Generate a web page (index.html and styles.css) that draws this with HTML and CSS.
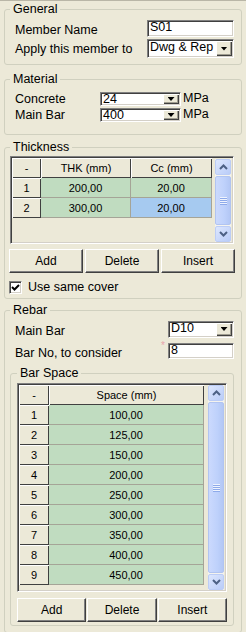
FILE: index.html
```html
<!DOCTYPE html>
<html lang="en">
<head>
  <meta charset="UTF-8">
  <title>Slab Member</title>
  <link rel="stylesheet" href="styles.css">
</head>
<body>
  <div class="panel">
    <!-- General -->
    <fieldset class="group general">
      <legend>General</legend>
      <div class="row">
        <span class="label low">Member Name</span>
        <div class="field wide">S01</div>
      </div>
      <div class="row">
        <span class="label">Apply this member to</span>
        <div class="combo wide tall"><span class="val">Dwg &amp; Rep</span><span class="drop"></span></div>
      </div>
    </fieldset>

    <!-- Material -->
    <fieldset class="group material">
      <legend>Material</legend>
      <div class="row">
        <span class="label fixed">Concrete</span>
        <div class="combo mat"><span class="val">24</span><span class="drop"></span></div>
        <span class="unit">MPa</span>
      </div>
      <div class="row">
        <span class="label fixed">Main Bar</span>
        <div class="combo mat"><span class="val">400</span><span class="drop"></span></div>
        <span class="unit">MPa</span>
      </div>
    </fieldset>

    <!-- Thickness -->
    <fieldset class="group thickness">
      <legend>Thickness</legend>
      <div class="grid thk-grid">
        <div class="cells thk-cells">
          <div class="hd">-</div><div class="hd">THK (mm)</div><div class="hd">Cc (mm)</div>
          <div class="hd">1</div><div class="cell">200,00</div><div class="cell">20,00</div>
          <div class="hd">2</div><div class="cell">300,00</div><div class="cell sel">20,00</div>
        </div>
        <div class="sb thk-sb">
          <div class="sb-btn"><svg width="9" height="6" viewBox="0 0 9 6"><polyline points="1,5 4.5,1.5 8,5" fill="none" stroke="#4d6185" stroke-width="2"/></svg></div>
          <div class="sb-thumb"><span class="grip"></span></div>
          <div class="sb-btn"><svg width="9" height="6" viewBox="0 0 9 6"><polyline points="1,1 4.5,4.5 8,1" fill="none" stroke="#4d6185" stroke-width="2"/></svg></div>
        </div>
      </div>
      <div class="btns thk-btns">
        <button class="btn">Add</button>
        <button class="btn">Delete</button>
        <button class="btn">Insert</button>
      </div>
      <label class="check">
        <span class="box"><svg width="9" height="9" viewBox="0 0 9 9"><polyline points="1,4 3.5,6.5 8,2" fill="none" stroke="#000" stroke-width="2"/></svg></span>
        Use same cover
      </label>
    </fieldset>

    <!-- Rebar -->
    <fieldset class="group rebar">
      <legend>Rebar</legend>
      <div class="row">
        <span class="label low">Main Bar</span>
        <div class="combo small"><span class="val">D10</span><span class="drop"></span></div>
      </div>
      <div class="row row-gap">
        <span class="label low">Bar No, to consider</span>
        <span class="req">*</span>
        <div class="field small">8</div>
      </div>

      <fieldset class="group bar-space">
        <legend>Bar Space</legend>
        <div class="grid space-grid">
          <div class="cells space-cells">
            <div class="hd">-</div><div class="hd">Space (mm)</div>
            <div class="hd">1</div><div class="cell">100,00</div>
            <div class="hd">2</div><div class="cell">125,00</div>
            <div class="hd">3</div><div class="cell">150,00</div>
            <div class="hd">4</div><div class="cell">200,00</div>
            <div class="hd">5</div><div class="cell">250,00</div>
            <div class="hd">6</div><div class="cell">300,00</div>
            <div class="hd">7</div><div class="cell">350,00</div>
            <div class="hd">8</div><div class="cell">400,00</div>
            <div class="hd">9</div><div class="cell">450,00</div>
          </div>
          <div class="sb">
            <div class="sb-btn"><svg width="9" height="6" viewBox="0 0 9 6"><polyline points="1,5 4.5,1.5 8,5" fill="none" stroke="#4d6185" stroke-width="2"/></svg></div>
            <div class="sb-thumb"><span class="grip"></span></div>
            <div class="sb-btn"><svg width="9" height="6" viewBox="0 0 9 6"><polyline points="1,1 4.5,4.5 8,1" fill="none" stroke="#4d6185" stroke-width="2"/></svg></div>
          </div>
        </div>
        <div class="btns space-btns">
          <button class="btn">Add</button>
          <button class="btn">Delete</button>
          <button class="btn">Insert</button>
        </div>
      </fieldset>
    </fieldset>
  </div>
</body>
</html>
```

FILE: styles.css
```css
* {
  box-sizing: border-box;
}
body {
  margin: 0;
  background: #ece9d8;
  font-family: "Liberation Sans", Arial, sans-serif;
  font-size: 12.5px;
  color: #000;
}
.panel {
  width: 246px;
  height: 632px;
  border-top: 1px solid #b9b6a7;
  overflow: hidden;
}

/* group boxes */
.group {
  margin: 0 4px;
  padding: 0 7px 6px 5px;
  border: 1px solid #d0d0bf;
  border-radius: 3px;
  min-width: 0;
}
.group legend {
  padding: 0 3px;
  line-height: 14px;
}
.general {
  margin-top: 1px;
  padding-top: 3px;
}
.material {
  margin-top: 7px;
  padding-top: 6px;
  padding-bottom: 12px;
}
.thickness {
  margin-top: 5px;
  padding-top: 2px;
  padding-bottom: 4px;
}
.rebar {
  margin-top: 4px;
  padding-top: 3px;
  padding-bottom: 6px;
}
.bar-space {
  margin: 6px 0 0;
  padding: 3px 6px 3px 6px;
}

/* label rows */
.row {
  display: flex;
  align-items: center;
  padding-left: 5px;
}
.row + .row {
  margin-top: 2px;
}
.row-gap + .row-gap,
.row.row-gap {
  margin-top: 4px;
}
.label {
  flex: 1;
  white-space: nowrap;
  line-height: 14px;
}
.label.low {
  padding-top: 4px;
}
.label.fixed {
  flex: none;
  width: 85px;
}
.unit {
  align-self: flex-start;
  margin-left: 2px;
  line-height: 10px;
  padding-top: 1px;
}
.req {
  align-self: flex-start;
  color: #e8a4ac;
  font-size: 10px;
  line-height: 8px;
  margin-right: 3px;
}

/* sunken edit / combo boxes */
.field,
.combo {
  background: #fff;
  border: 1px solid;
  border-color: #808080 #fff #fff #808080;
  box-shadow: inset 1px 1px #404040, inset -1px -1px #d4d0c8;
  padding: 1px;
  white-space: nowrap;
  overflow: hidden;
}
.field {
  padding: 1px 2px;
  line-height: 10px;
}
.field.wide {
  width: 87px;
  height: 17px;
}
.field.small {
  width: 66px;
  height: 16px;
}
.combo {
  display: flex;
}
.combo .val {
  flex: 1;
  padding-left: 1px;
  line-height: 10px;
}
.combo.wide {
  width: 87px;
}
.combo.tall {
  height: 19px;
}
.combo.tall .val {
  line-height: 12px;
}
.combo.mat {
  width: 81px;
  height: 14px;
}
.combo.small {
  width: 66px;
  height: 17px;
}
.drop {
  width: 16px;
  flex: none;
  background: #ece9d8;
  box-shadow: inset 1px 1px #fff, inset -1px -1px #404040, inset -2px -2px #a09d90;
  display: flex;
  align-items: center;
  justify-content: center;
}
.drop::after {
  content: "";
  width: 7px;
  height: 4px;
  background: #000;
  clip-path: polygon(0 0, 100% 0, 50% 100%);
}

/* grids */
.grid {
  display: flex;
  border: 1px solid;
  border-color: #808080 #fff #fff #808080;
  box-shadow: inset 1px 1px #404040, inset -1px -1px #d4d0c8;
  padding: 1px 2px 1px 1px;
  font-size: 11px;
}
.thk-grid {
  height: 88px;
  gap: 3px;
}
.space-grid {
  height: 209px;
  gap: 4px;
}
.cells {
  display: grid;
  grid-auto-rows: 20px;
  align-content: start;
}
.thk-cells {
  grid-template-columns: 29px 90px 81px;
}
.space-cells {
  grid-template-columns: 30px 155px;
}
.hd {
  background: #ece9d8;
  box-shadow: inset 1px 1px #fff, inset -1px -1px #404040;
  display: flex;
  align-items: center;
  justify-content: center;
}
.cell {
  background: #c0dcc0;
  border-right: 1px solid #a5a497;
  border-bottom: 1px solid #a5a497;
  display: flex;
  align-items: center;
  justify-content: center;
}
.cell.sel {
  background: #a6caf0;
}

/* xp scrollbar */
.sb {
  width: 16px;
  flex: none;
  display: flex;
  flex-direction: column;
  background: #f4f3ee;
}
.thk-sb {
  margin-top: 1px;
}
.sb-btn {
  height: 16px;
  flex: none;
  border: 1px solid #bccdf6;
  border-radius: 2px;
  background: linear-gradient(135deg, #dde7fe, #b9ccf8);
  display: flex;
  align-items: center;
  justify-content: center;
}
.sb-thumb {
  flex: 1;
  margin: 1px 0;
  border: 1px solid #b1c4f1;
  border-radius: 2px;
  background: linear-gradient(90deg, #cbd9fd, #bed1fb 60%, #b3c7f5);
  display: flex;
  align-items: center;
  justify-content: center;
}
.grip {
  width: 7px;
  height: 8px;
  background: repeating-linear-gradient(#eef3fe 0 1px, #8eaaea 1px 2px);
}

/* buttons */
.btns {
  display: grid;
  grid-template-columns: repeat(3, 1fr);
}
.thk-btns {
  gap: 2px;
  margin: 5px -1px 0;
}
.space-btns {
  gap: 1px;
  margin-top: 6px;
}
.btn {
  height: 24px;
  font-family: inherit;
  font-size: 12px;
  color: #000;
  background: #ece9d8;
  border: 1px solid;
  border-color: #fff #404040 #404040 #fff;
  box-shadow: inset -1px -1px #808080;
  padding: 0;
}

/* checkbox */
.check {
  display: flex;
  align-items: center;
  gap: 6px;
  margin: 7px 0 0 -1px;
  line-height: 14px;
}
.box {
  width: 13px;
  height: 13px;
  background: #fff;
  border: 1px solid;
  border-color: #808080 #fff #fff #808080;
  box-shadow: inset 1px 1px #404040, inset -1px -1px #d4d0c8;
  display: flex;
  align-items: center;
  justify-content: center;
}
```
